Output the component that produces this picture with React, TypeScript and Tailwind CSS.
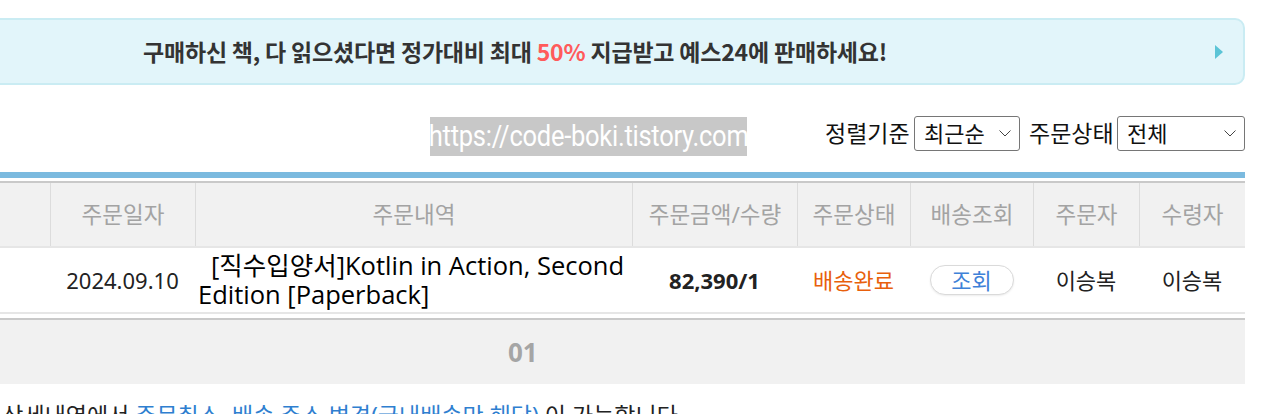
import React from "react";

const font = "font-['Noto_Sans','Noto_Sans_CJK_KR',sans-serif]";

const Chevron: React.FC = () => (
  <svg width="12" height="7" viewBox="0 0 12 7" fill="none">
    <path d="M0.5 0.5l5.5 5.5L11.5 0.5" stroke="#444" strokeWidth="1" />
  </svg>
);

const FakeSelect: React.FC<{ label: string; width: string }> = ({ label, width }) => (
  <div
    className={`flex h-[35px] items-center justify-between rounded-[3px] border border-[#767676] bg-white pl-[9px] pr-[8px] text-[22px] text-[#111] ${width}`}
  >
    <span>{label}</span>
    <Chevron />
  </div>
);

export default function App() {
  const headers = ["", "주문일자", "주문내역", "주문금액/수량", "주문상태", "배송조회", "주문자", "수령자"];

  return (
    <div className={`h-[414px] w-[1270px] overflow-hidden bg-white ${font}`}>
      <div className="-ml-[20px] w-[1265px] pt-[18px]">
        {/* 배너 */}
        <div className="flex h-[67px] items-center rounded-[10px] border-2 border-[#caecf3] bg-[#e2f5fa] pl-[161px]">
          <p className="font-['Noto_Sans_CJK_KR',sans-serif] text-[23px] font-bold tracking-[-0.2px] text-[#333]">
            구매하신 책, 다 읽으셨다면 정가대비 최대 <span className="text-[#ff5b5b]">50%</span> 지급받고 예스24에 판매하세요!
          </p>
          <span className="ml-auto mr-[20px] h-0 w-0 border-y-[7px] border-l-[8px] border-y-transparent border-l-[#5bc4d6]" />
        </div>

        {/* 정렬 / 상태 */}
        <div className="mt-[31px] flex h-[40px] items-center">
          <div className="ml-[450px] flex h-[39px] w-[317px] items-center justify-center overflow-hidden bg-[#c8c8c8] text-white">
            <span className="inline-block scale-x-[0.88] whitespace-nowrap font-['Roboto',sans-serif] text-[29px] leading-none tracking-[-0.3px]">
              https://code-boki.tistory.com
            </span>
          </div>
          <div className="ml-auto flex items-center pb-[5px] text-[23px] text-[#111]">
            <span className="w-[90px] pl-[1px]">정렬기준</span>
            <FakeSelect label="최근순" width="w-[106px]" />
            <span className="ml-[9px] w-[88px]">주문상태</span>
            <FakeSelect label="전체" width="w-[128px]" />
          </div>
        </div>

        {/* 테이블 */}
        <div className="mt-[16px] h-[6px] bg-[#7bbadf]" />
        <div className="mt-[3px] h-[2px] bg-[#c9c9c9]" />
        <div className="grid h-[65px] grid-cols-[70px_145px_437px_165px_113px_123px_106px_106px] border-b-2 border-[#e6e6e6] bg-[#f1f1f1]">
          {headers.map((h, i) => (
            <div
              key={i}
              className={`flex items-center justify-center text-[22.5px] text-[#a3a3a3] ${i > 0 ? "border-l border-[#dcdcdc]" : ""}`}
            >
              {h}
            </div>
          ))}
        </div>
        <div className="grid h-[66px] grid-cols-[70px_145px_437px_165px_113px_123px_106px_106px] items-center border-b-2 border-[#e6e6e6] text-[22px] text-[#222]">
          <div />
          <div className="text-center">2024.09.10</div>
          <div className="whitespace-nowrap pl-[3px] font-['Open_Sans','Noto_Sans_CJK_KR',sans-serif] text-[25.5px] leading-[29px] text-black">
            <div className="pl-[13px]">[직수입양서]Kotlin in Action, Second</div>
            <div>Edition [Paperback]</div>
          </div>
          <div className="text-center font-bold">82,390/1</div>
          <div className="text-center text-[#e8600c]">배송완료</div>
          <div className="flex justify-center">
            <button className="h-[30px] w-[84px] rounded-full border border-[#dadada] bg-white text-[22px] leading-none text-[#3f82d8] shadow-[0_1px_2px_rgba(0,0,0,0.08)]">
              조회
            </button>
          </div>
          <div className="text-center">이승복</div>
          <div className="text-center">이승복</div>
        </div>

        {/* 페이지 */}
        <div className="mt-[4px] h-[2px] bg-[#c9c9c9]" />
        <div className="flex h-[64px] items-center bg-[#f1f1f1] pl-[528px]">
          <span className="text-[26px] font-bold text-[#a5a5a5]">01</span>
        </div>

        <p className="-ml-[20px] mt-[17px] whitespace-nowrap text-[23px] leading-[28px] text-[#222]">
          주문상세내역에서 <span className="text-[#2f7fd0]">주문취소, 배송 주소 변경(국내배송만 해당)</span> 이 가능합니다.
        </p>
      </div>
    </div>
  );
}
